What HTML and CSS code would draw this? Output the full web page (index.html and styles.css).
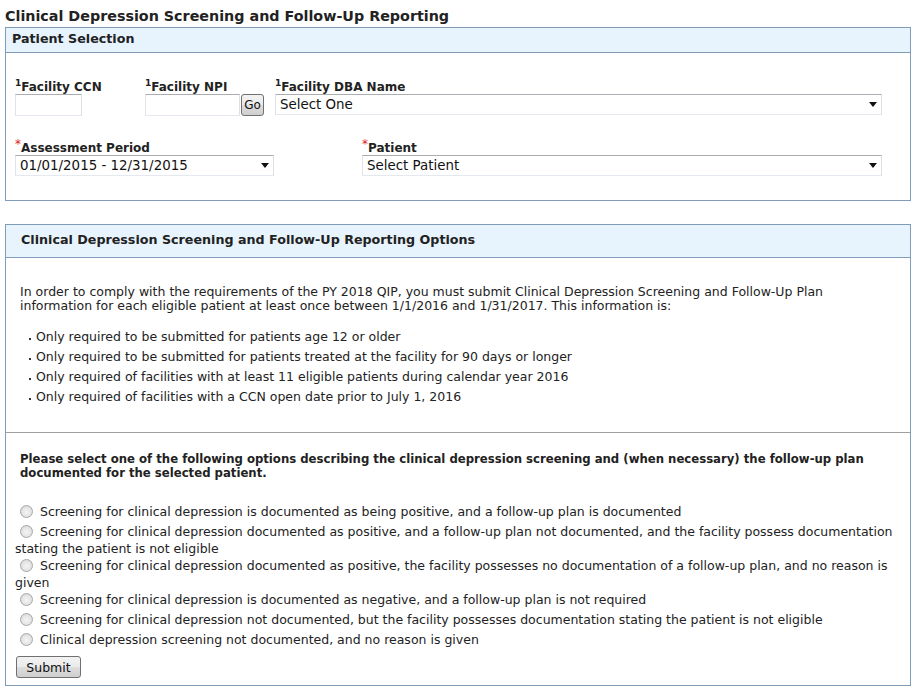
FILE: index.html
```html
<!DOCTYPE html>
<html lang="en">
<head>
<meta charset="utf-8">
<title>Clinical Depression Screening and Follow-Up Reporting</title>
<link rel="stylesheet" href="styles.css">
</head>
<body>
<h1 class="page-title">Clinical Depression Screening and Follow-Up Reporting</h1>

<section class="panel">
  <div class="panel-head head-sel">Patient Selection</div>
  <div class="panel-body selection">
    <div class="row row-top">
      <div class="field f-ccn">
        <label class="lbl"><sup class="note">1</sup>Facility CCN</label>
        <input class="text ccn" type="text">
      </div>
      <div class="field f-npi">
        <label class="lbl"><sup class="note">1</sup>Facility NPI</label>
        <div class="npi-line">
          <input class="text npi" type="text">
          <button class="btn go" type="button">Go</button>
        </div>
      </div>
      <div class="field f-dba">
        <label class="lbl"><sup class="note">1</sup>Facility DBA Name</label>
        <div class="select-wrap dba">
          <select class="sel"><option>Select One</option></select>
          <span class="arrow"></span>
        </div>
      </div>
    </div>
    <div class="row row-bottom">
      <div class="field f-period">
        <label class="lbl lbl-req"><sup class="req">*</sup>Assessment Period</label>
        <div class="select-wrap period">
          <select class="sel"><option>01/01/2015 - 12/31/2015</option></select>
          <span class="arrow"></span>
        </div>
      </div>
      <div class="field f-patient">
        <label class="lbl lbl-req"><sup class="req">*</sup>Patient</label>
        <div class="select-wrap patient">
          <select class="sel"><option>Select Patient</option></select>
          <span class="arrow"></span>
        </div>
      </div>
    </div>
  </div>
</section>

<section class="panel options">
  <div class="panel-head head-opt">Clinical Depression Screening and Follow-Up Reporting Options</div>
  <div class="panel-body info">
    <p class="intro">In order to comply with the requirements of the PY 2018 QIP, you must submit Clinical Depression Screening and Follow-Up Plan information for each eligible patient at least once between 1/1/2016 and 1/31/2017. This information is:</p>
    <ul class="reqs">
      <li>Only required to be submitted for patients age 12 or older</li>
      <li>Only required to be submitted for patients treated at the facility for 90 days or longer</li>
      <li>Only required of facilities with at least 11 eligible patients during calendar year 2016</li>
      <li>Only required of facilities with a CCN open date prior to July 1, 2016</li>
    </ul>
  </div>
  <div class="panel-body choose">
    <p class="question">Please select one of the following options describing the clinical depression screening and (when necessary) the follow-up plan documented for the selected patient.</p>
    <div class="opts">
      <label class="opt"><input type="radio" name="o"> Screening for clinical depression is documented as being positive, and a follow-up plan is documented</label>
      <label class="opt"><input type="radio" name="o"> Screening for clinical depression documented as positive, and a follow-up plan not documented, and the facility possess documentation stating the patient is not eligible</label>
      <label class="opt"><input type="radio" name="o"> Screening for clinical depression documented as positive, the facility possesses no documentation of a follow-up plan, and no reason is given</label>
      <label class="opt"><input type="radio" name="o"> Screening for clinical depression is documented as negative, and a follow-up plan is not required</label>
      <label class="opt"><input type="radio" name="o"> Screening for clinical depression not documented, but the facility possesses documentation stating the patient is not eligible</label>
      <label class="opt"><input type="radio" name="o"> Clinical depression screening not documented, and no reason is given</label>
    </div>
    <button class="btn submit" type="button">Submit</button>
  </div>
</section>
</body>
</html>
```

FILE: styles.css
```css
* { box-sizing: border-box; }

body {
  margin: 0;
  padding: 5px 5px 0 5px;
  font-family: "DejaVu Sans", Verdana, sans-serif;
  font-size: 12.5px;
  color: #222;
  background: #fff;
}

.page-title {
  margin: 0;
  font-size: 14.3px;
  line-height: 22px;
  font-weight: bold;
  color: #222;
}

.panel {
  border: 1px solid #7f9db9;
}

.panel.options {
  margin-top: 23px;
}

.panel-head {
  background: #e8f4fd;
  border-bottom: 1px solid #7f9db9;
  font-weight: bold;
  font-size: 12.7px;
  color: #222;
}

.head-sel {
  height: 25px;
  line-height: 22px;
  padding-left: 6px;
}

.head-opt {
  height: 33px;
  line-height: 30px;
  padding-left: 15px;
}

/* ---- Patient selection ---- */
.selection {
  padding: 25px 27px 24px 9px;
}

.row {
  display: grid;
}

.row-top {
  grid-template-columns: 130px 130px 1fr;
}

.row-bottom {
  margin-top: 23px;
  grid-template-columns: 347px 1fr;
}

.lbl {
  display: block;
  height: 16px;
  line-height: 18px;
  font-size: 12px;
  font-weight: bold;
  color: #222;
  white-space: nowrap;
}

.lbl-req {
  line-height: 19px;
}

.note {
  font-size: 9px;
  vertical-align: 5px;
  line-height: 0;
}

.req {
  font-size: 12px;
  font-weight: normal;
  color: #d22;
  vertical-align: 4px;
  line-height: 0;
}

.text {
  display: block;
  height: 22px;
  border: 1px solid;
  border-color: #abadb3 #dbdfe6 #e3e9ef #e2e3ea;
  background: #fff;
  padding: 0 3px;
  font: inherit;
  margin: 0;
}

.ccn { width: 67px; }
.npi { width: 95px; }

.npi-line {
  display: flex;
  align-items: center;
  gap: 1px;
}

.btn {
  font-family: "DejaVu Sans", Verdana, sans-serif;
  font-size: 12.5px;
  color: #111;
  border: 1px solid #707070;
  border-radius: 3px;
  background: linear-gradient(#f2f2f2 0%, #ebebeb 50%, #dddddd 51%, #cfcfcf 100%);
  padding: 0;
  margin: 0;
}

.go {
  width: 23px;
  height: 22px;
  font-size: 12px;
}

.select-wrap {
  position: relative;
  height: 21px;
}

.dba { width: 607px; }
.patient { width: 520px; }
.period { width: 259px; }

.sel {
  -webkit-appearance: none;
  appearance: none;
  display: block;
  width: 100%;
  height: 21px;
  margin: 0;
  border: 1px solid;
  border-color: #abadb3 #dbdfe6 #e3e9ef #e2e3ea;
  border-radius: 0;
  background: #fff;
  padding: 0 20px 0 4px;
  font-family: "DejaVu Sans", Verdana, sans-serif;
  font-size: 13.4px;
  color: #111;
  outline: none;
}

.arrow {
  position: absolute;
  right: 5px;
  top: 8px;
  width: 0;
  height: 0;
  border-left: 4px solid transparent;
  border-right: 4px solid transparent;
  border-top: 5px solid #111;
  pointer-events: none;
}

/* ---- Options panel ---- */
.info {
  padding: 27px 14px 25px 14px;
  border-bottom: 1px solid #a0a0a0;
}

.intro {
  margin: 0;
  line-height: 14px;
}

.reqs {
  margin: 14px 0 0 0;
  padding: 0 0 0 16px;
  list-style: none;
}

.reqs li {
  position: relative;
  line-height: 20px;
  height: 20px;
}

.reqs li::before {
  content: "";
  position: absolute;
  left: -7px;
  top: 11px;
  width: 2px;
  height: 2px;
  background: #333;
}

.choose {
  padding: 19px 9px 7px 9px;
}

.question {
  margin: 0 0 0 5px;
  font-size: 11.7px;
  font-weight: bold;
  line-height: 14px;
  color: #222;
}

.opts {
  margin-top: 22px;
}

.opt {
  display: block;
  line-height: 14px;
  color: #222;
}

.opt input {
  -webkit-appearance: none;
  appearance: none;
  width: 13px;
  height: 13px;
  margin: 3px 3px 4px 5px;
  vertical-align: middle;
  border: 1px solid #a7a7a7;
  border-radius: 50%;
  background: radial-gradient(circle at 50% 55%, #f4f4f4 0%, #e6e6e6 50%, #cfcfcf 100%);
}

.submit {
  display: block;
  margin: 6px 0 0 1px;
  width: 65px;
  height: 22px;
}
```
